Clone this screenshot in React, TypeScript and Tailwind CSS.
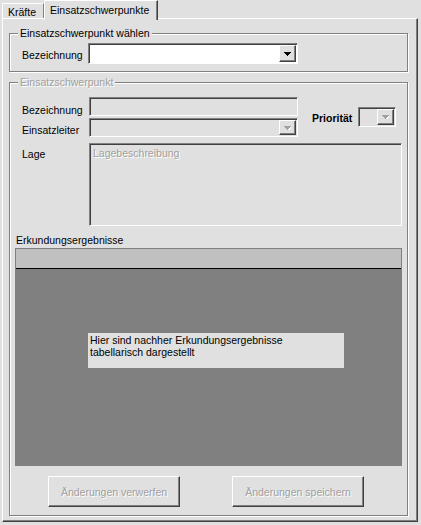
import React from 'react';

const sunken =
	"border border-t-[#808080] border-l-[#808080] border-b-white border-r-white shadow-[inset_1px_1px_0_#404040]";
const raised =
	"border border-t-white border-l-white border-b-[#404040] border-r-[#404040] shadow-[inset_-1px_-1px_0_#808080]";
const etched = "border border-[#808080] shadow-[inset_1px_1px_0_#fff,1px_1px_0_#fff]";
const grayText = "text-[#a0a0a0] [text-shadow:1px_1px_0_#fff]";

const Arrow: React.FC<{ disabled?: boolean }> = ({ disabled }) => (
	<svg width="7" height="4" viewBox="0 0 7 4" shapeRendering="crispEdges">
		{disabled && <path d="M1 1h7v1H1zM2 2h5v1H2zM3 3h3v1H3zM4 4h1v1H4z" fill="#fff" />}
		<path d="M0 0h7v1H0zM1 1h5v1H1zM2 2h3v1H2zM3 3h1v1H3z" fill={disabled ? "#a0a0a0" : "#000"} />
	</svg>
);

const Combo: React.FC<{ className: string; white?: boolean; disabled?: boolean }> = ({
	className,
	white,
	disabled,
}) => (
	<div className={`flex justify-end p-[1px] ${white ? "bg-white" : "bg-[#e0e0e0]"} ${sunken} ${className}`}>
		<div className={`w-[17px] h-full flex items-center justify-center bg-[#e0e0e0] ${raised}`}>
			<Arrow disabled={disabled} />
		</div>
	</div>
);

export default function App() {
	return (
		<div
			className="w-[421px] h-[525px] bg-[#e0e0e0] px-[2px] text-[10.5px] leading-[12px] text-black"
			style={{ fontFamily: '"Liberation Sans", Arial, sans-serif' }}
		>
			{/* tabs */}
			<div className="flex items-start h-[18px]">
				<div className="mt-[3px] h-[15px] w-[42px] pl-[5px] pt-[2px] border-t border-l border-t-white border-l-white border-r border-r-[#808080] rounded-tl-[2px]">
					Kräfte
				</div>
				<div className="relative z-10 h-[20px] w-[114px] bg-[#e0e0e0] pl-[5px] pt-[3px] border-t border-l border-t-white border-l-white border-r border-r-[#404040] shadow-[inset_-1px_0_0_#808080] rounded-tl-[2px]">
					Einsatzschwerpunkte
				</div>
			</div>

			{/* panel */}
			<div className={`w-[416px] h-[504px] ${raised}`}>
				<fieldset className={`ml-[6px] mt-[8px] w-[399px] px-[5px] pt-[4px] pb-[7px] ${etched}`}>
					<legend className="ml-[3px] px-[2px] bg-[#e0e0e0]">Einsatzschwerpunkt wählen</legend>
					<div className="flex items-center">
						<span className="w-[73px] pl-[7px] pt-[3px]">Bezeichnung</span>
						<Combo className="w-[210px] h-[21px]" white />
					</div>
				</fieldset>

				<fieldset className={`ml-[6px] mt-[4px] w-[399px] px-[5px] pt-[9px] pb-[8px] ${etched}`}>
					<legend className={`ml-[3px] px-[2px] bg-[#e0e0e0] ${grayText}`}>Einsatzschwerpunkt</legend>

					<div className="flex items-center">
						<div className="flex flex-col gap-[2px]">
							<div className="flex items-center">
								<span className="w-[74px] pl-[7px] pt-[7px]">Bezeichnung</span>
								<div className={`w-[209px] h-[19px] bg-[#e0e0e0] ${sunken}`}></div>
							</div>
							<div className="flex items-center">
								<span className="w-[74px] pl-[7px] pt-[5px]">Einsatzleiter</span>
								<Combo className="w-[209px] h-[19px]" disabled />
							</div>
						</div>
						<span className="ml-[14px] font-bold pt-[2px]">Priorität</span>
						<Combo className="ml-[6px] w-[38px] h-[20px]" disabled />
					</div>

					<div className="flex mt-[6px]">
						<span className="w-[74px] pl-[7px] pt-[5px]">Lage</span>
						<div className={`w-[313px] h-[83px] bg-[#e0e0e0] px-[3px] pt-[3px] ${sunken}`}>
							<span className={grayText}>Lagebeschreibung</span>
						</div>
					</div>

					<div className="mt-[8px] pl-[1px]">Erkundungsergebnisse</div>

					<div className="mt-[2px] w-[387px] h-[218px] border border-[#808080] flex flex-col">
						<div className="h-[20px] bg-[#c0c0c0] border-b border-b-black"></div>
						<div className="flex-1 bg-[#808080] pl-[72px] pt-[64px]">
							<div className="w-[256px] h-[35px] bg-[#e0e0e0] px-[2px] pt-[1px]">
								Hier sind nachher Erkundungsergebnisse
								<br />
								tabellarisch dargestellt
							</div>
						</div>
					</div>

					<div className="flex mt-[10px]">
						<div
							className={`ml-[33px] w-[132px] h-[31px] flex items-center justify-center bg-[#e0e0e0] ${raised} ${grayText}`}
						>
							Änderungen verwerfen
						</div>
						<div
							className={`ml-[52px] w-[132px] h-[31px] flex items-center justify-center bg-[#e0e0e0] ${raised} ${grayText}`}
						>
							Änderungen speichern
						</div>
					</div>
				</fieldset>
			</div>
		</div>
	);
}
